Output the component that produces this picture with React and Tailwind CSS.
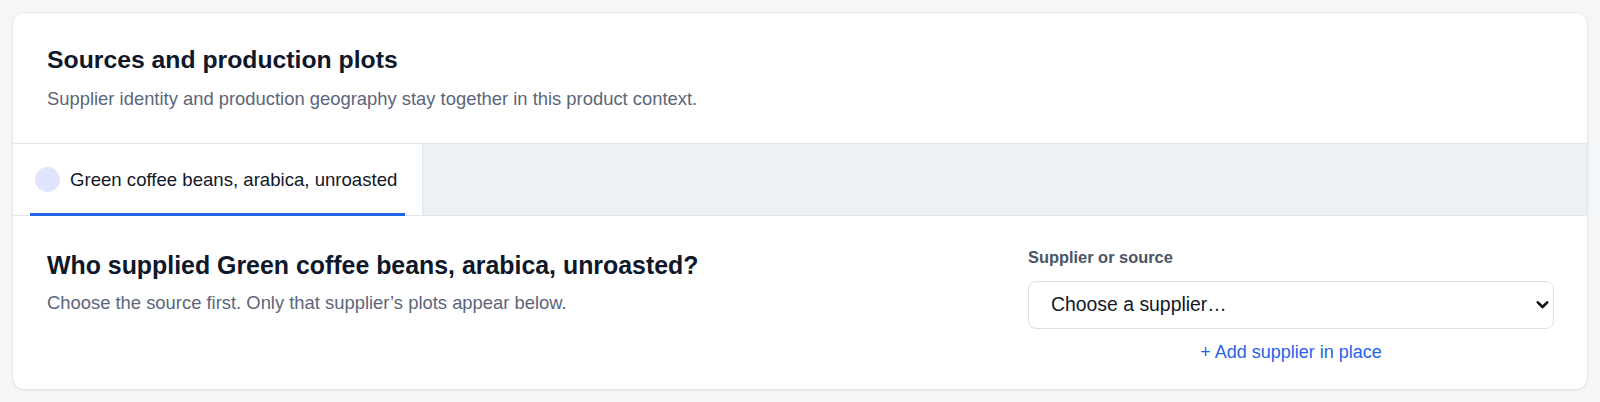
import React from "react";

export default function App() {
  return (
    <div
      className="min-h-[402px] w-full bg-[#f5f6f8] p-3"
      style={{ fontFamily: '"Liberation Sans", Arial, Helvetica, sans-serif' }}
    >
      <div className="overflow-hidden rounded-[12px] border border-[#e3e6ea] bg-white shadow-[0_1px_2px_rgba(15,23,42,0.05)]">
        {/* Header */}
        <div className="border-b border-[#e3e6ea] pl-[34px] pr-[33px] pt-8 pb-[31px]">
          <h2 className="text-[24.75px] font-bold leading-[30px] text-[#0f172a]">
            Sources and production plots
          </h2>
          <p className="mt-[10px] text-[18.4px] leading-[27px] text-[#5b667a]">
            Supplier identity and production geography stay together in this product context.
          </p>
        </div>

        {/* Tab strip */}
        <div className="flex border-b border-[#e3e6ea] bg-[#eef1f4]">
          <button
            type="button"
            className="relative flex h-[71px] items-center gap-[10px] border-r border-[#e3e6ea] bg-white pl-[22px] pr-[25px]"
          >
            <span className="h-[25px] w-[25px] shrink-0 rounded-full bg-[#e0e5fb]" />
            <span className="whitespace-nowrap text-[18.6px] leading-[27px] text-[#111827]">
              Green coffee beans, arabica, unroasted
            </span>
            <span className="absolute bottom-[-1px] left-[17px] right-[17px] h-[3px] bg-[#2563eb]" />
          </button>
        </div>

        {/* Body */}
        <div className="flex items-start justify-between pl-[34px] pr-[33px] pt-[31px] pb-[23px]">
          <div className="pt-[3px]">
            <h3 className="text-[24.9px] font-bold leading-[30px] text-[#0f172a]">
              Who supplied Green coffee beans, arabica, unroasted?
            </h3>
            <p className="mt-[9px] text-[18.4px] leading-[27px] text-[#5b667a]">
              Choose the source first. Only that supplier’s plots appear below.
            </p>
          </div>

          <div className="flex w-[526px] flex-col">
            <label className="text-[16.4px] font-bold leading-[20px] text-[#4a5567]">
              Supplier or source
            </label>
            <div className="relative mt-[14px]">
              <select
                defaultValue=""
                className="h-[48px] w-full appearance-none rounded-[8px] border border-[#dde1e6] bg-white pl-[22px] pr-10 text-[19.4px] text-[#111827] outline-none"
                style={{ fontFamily: '"Liberation Sans", Arial, Helvetica, sans-serif' }}
              >
                <option value="">Choose a supplier…</option>
              </select>
              <svg
                className="pointer-events-none absolute right-[5px] top-1/2 -translate-y-1/2"
                width="13"
                height="9"
                viewBox="0 0 13 9"
                fill="none"
              >
                <path
                  d="M1.8 1.8 L6.5 6.5 L11.2 1.8"
                  stroke="#111111"
                  strokeWidth="2.6"
                  strokeLinecap="round"
                  strokeLinejoin="round"
                />
              </svg>
            </div>
            <button
              type="button"
              className="mt-[10px] self-center text-[18px] leading-[27px] text-[#2563eb]"
            >
              + Add supplier in place
            </button>
          </div>
        </div>
      </div>
    </div>
  );
}
